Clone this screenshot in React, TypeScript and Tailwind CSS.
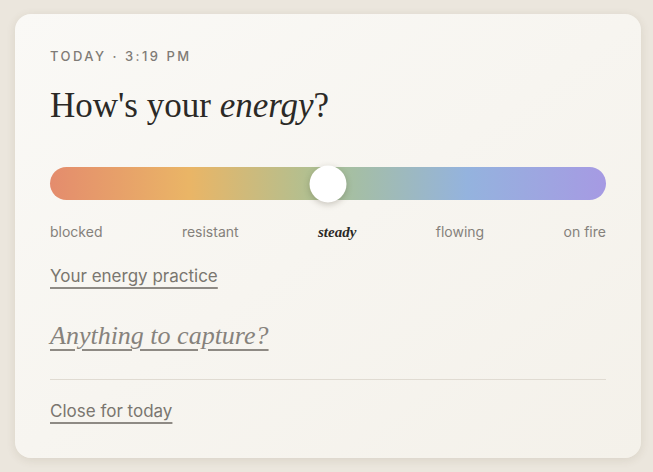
const labels = ['blocked', 'resistant', 'steady', 'flowing', 'on fire'];

export default function App() {
  const value = 50; // percent along the scale

  return (
    <div className="min-h-screen w-full bg-[#ebe6dd] pt-[14px] pl-[15px] font-['Inter',sans-serif]">
      <div className="w-[626px] h-[444px] rounded-[16px] bg-gradient-to-br from-[#faf9f6] to-[#f4f1ea] shadow-[0_2px_10px_rgba(90,70,40,0.12)] px-[35px] pt-[32px]">
        {/* Timestamp */}
        <p className="text-[13px] leading-[20px] font-medium tracking-[0.19em] text-[#7f7b76]">
          TODAY · 3:19 PM
        </p>

        {/* Heading */}
        <h1 className="mt-[20px] text-[35px] leading-[40px] text-[#2b2926] font-['Liberation_Serif',serif]">
          How's your <em className="italic">energy</em>?
        </h1>

        {/* Energy slider */}
        <div className="relative mt-[41px] h-[33px] rounded-full bg-[linear-gradient(to_right,#e48c6d_0%,#eab566_25%,#a9c197_50%,#94b3de_75%,#a69ae3_100%)]">
          <div
            className="absolute top-1/2 w-[37px] h-[37px] -translate-x-1/2 -translate-y-1/2 rounded-full bg-white shadow-[0_2px_6px_rgba(60,50,30,0.25)]"
            style={{ left: `${value}%` }}
          />
        </div>

        <div className="mt-[22px] flex justify-between items-center text-[14px] leading-[20px] text-[#85817b]">
          {labels.map((l) =>
            l === 'steady' ? (
              <span key={l} className="italic font-bold text-[15px] text-[#2b2926] font-['Liberation_Serif',serif]">
                {l}
              </span>
            ) : (
              <span key={l}>{l}</span>
            )
          )}
        </div>

        {/* Links */}
        <div className="mt-[22px]">
          <a className="text-[17px] leading-[24px] text-[#7a766f] underline decoration-[#8e8a84] decoration-2 underline-offset-[5px]">
            Your energy practice
          </a>
        </div>

        <div className="mt-[33px]">
          <a className="text-[26px] leading-[30px] italic text-[#86827c] font-['Liberation_Serif',serif] underline decoration-[#8e8a84] decoration-2 underline-offset-[5px]">
            Anything to capture?
          </a>
        </div>

        <div className="mt-[28px] h-px bg-[#e0dbd2]" />

        <div className="mt-[19px]">
          <a className="text-[17px] leading-[24px] text-[#7a766f] underline decoration-[#8e8a84] decoration-2 underline-offset-[5px]">
            Close for today
          </a>
        </div>
      </div>
    </div>
  );
}
